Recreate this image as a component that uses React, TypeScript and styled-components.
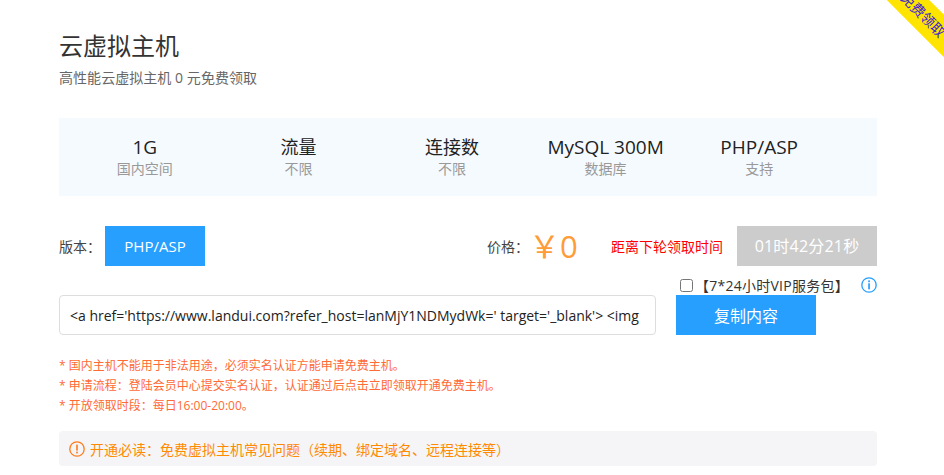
import React from "react";
import styled, { createGlobalStyle } from "styled-components";

const Global = createGlobalStyle`
  html, body { margin: 0; padding: 0; background: #fff; overflow: hidden; }
  body { font-family: "Open Sans", "Noto Sans CJK SC", sans-serif; }
`;

const Page = styled.div`
  position: relative;
  width: 944px;
  height: 475px;
  overflow: hidden;
  padding: 29px 67px 0 59px;
  box-sizing: border-box;
`;

const Ribbon = styled.div`
  position: absolute;
  top: 0px;
  right: -44px;
  width: 130px;
  height: 30px;
  line-height: 30px;
  transform: rotate(45deg);
  background: #ffe400;
  color: #3a22d8;
  font-size: 14px;
  text-align: center;
`;

const Title = styled.h1`
  margin: 0;
  font-size: 24px;
  line-height: 34px;
  font-weight: 400;
  color: #333;
`;

const Subtitle = styled.p`
  margin: 5px 0 0;
  font-size: 14px;
  line-height: 20px;
  letter-spacing: 0.05px;
  color: #666;
`;

const SpecPanel = styled.div`
  display: grid;
  grid-template-columns: repeat(5, 153.6px);
  margin-top: 30px;
  height: 78px;
  padding: 17px 0 0 9px;
  box-sizing: border-box;
  background: #f5faff;
`;

const Spec = styled.div`
  text-align: center;
`;

const SpecValue = styled.div<{ $latin?: boolean }>`
  font-size: ${(p) => (p.$latin ? "19px" : "18px")};
  line-height: 24px;
  color: #222;
`;

const SpecLabel = styled.div`
  font-size: 14px;
  line-height: 20px;
  color: #999;
`;

const PriceRow = styled.div`
  display: flex;
  align-items: center;
  height: 40px;
  margin-top: 30px;
`;

const FieldLabel = styled.span`
  font-size: 14px;
  color: #444;
  width: 46px;
`;

const VersionButton = styled.button`
  width: 100px;
  height: 40px;
  border: 0;
  padding: 0;
  background: #269fff;
  color: #fff;
  font: inherit;
  font-size: 15px;
`;

const PriceLabel = styled.span`
  margin-left: 282px;
  width: 42px;
  font-size: 14px;
  color: #444;
`;

const PriceValue = styled.span`
  width: 82px;
  font-size: 31px;
  line-height: 40px;
  color: #ff9c38;
`;

const CountdownLabel = styled.span`
  width: 126px;
  font-size: 14px;
  color: #f00;
`;

const Countdown = styled.div`
  width: 140px;
  height: 40px;
  line-height: 40px;
  text-align: center;
  background: #ccc;
  color: #fff;
  font-size: 16px;
  letter-spacing: 0.2px;
`;

const VipRow = styled.div`
  display: flex;
  align-items: center;
  height: 29px;
  box-sizing: border-box;
  padding: 9px 0 0 621px;
  font-size: 14px;
  letter-spacing: 0.25px;
  color: #333;
`;

const VipCheck = styled.input`
  width: 13px;
  height: 13px;
  margin: 0;
`;

const VipText = styled.span`
  margin-left: 2px;
  width: 167px;
  white-space: nowrap;
`;

const InfoIcon = styled.svg`
  display: block;
  flex: none;
`;

const CopyRow = styled.div`
  display: flex;
  gap: 20px;
`;

const CodeInput = styled.input`
  width: 597px;
  height: 40px;
  box-sizing: border-box;
  border: 1px solid #ddd;
  border-radius: 4px;
  padding: 0 14px 0 10px;
  font: inherit;
  font-size: 14px;
  color: #222;
  background: #fff;
  outline: none;
`;

const CopyButton = styled.button`
  width: 140px;
  height: 40px;
  border: 0;
  padding: 0;
  background: #269fff;
  color: #fff;
  font: inherit;
  font-size: 16px;
`;

const Notes = styled.ul`
  list-style: none;
  margin: 21px 0 0;
  padding: 0;
`;

const Note = styled.li`
  font-size: 12px;
  line-height: 20px;
  color: #ff6a35;
`;

const Notice = styled.div`
  display: flex;
  align-items: center;
  gap: 5px;
  margin-top: 15px;
  height: 35px;
  padding-left: 10px;
  border-radius: 4px;
  background: #f5f5f7;
  color: #ff8a00;
  font-size: 14px;
`;

export default function App() {
  const specs: [string, string, boolean][] = [
    ["1G", "国内空间", true],
    ["流量", "不限", false],
    ["连接数", "不限", false],
    ["MySQL 300M", "数据库", true],
    ["PHP/ASP", "支持", true],
  ];
  return (
    <Page>
      <Global />
      <Ribbon>免费领取</Ribbon>
      <Title>云虚拟主机</Title>
      <Subtitle>高性能云虚拟主机 0 元免费领取</Subtitle>
      <SpecPanel>
        {specs.map(([v, l, latin]) => (
          <Spec key={v}>
            <SpecValue $latin={latin}>{v}</SpecValue>
            <SpecLabel>{l}</SpecLabel>
          </Spec>
        ))}
      </SpecPanel>
      <PriceRow>
        <FieldLabel>版本：</FieldLabel>
        <VersionButton>PHP/ASP</VersionButton>
        <PriceLabel>价格：</PriceLabel>
        <PriceValue>￥0</PriceValue>
        <CountdownLabel>距离下轮领取时间</CountdownLabel>
        <Countdown>01时42分21秒</Countdown>
      </PriceRow>
      <VipRow>
        <VipCheck type="checkbox" />
        <VipText>【7*24小时VIP服务包】</VipText>
        <InfoIcon width="16" height="16" viewBox="0 0 16 16" fill="none">
          <circle cx="8" cy="8" r="7.2" stroke="#269fff" strokeWidth="1.3" />
          <rect x="7.2" y="3.4" width="1.7" height="1.8" fill="#269fff" />
          <rect x="7.2" y="6.3" width="1.7" height="6" fill="#269fff" />
        </InfoIcon>
      </VipRow>
      <CopyRow>
        <CodeInput
          readOnly
          value="<a href='https://www.landui.com?refer_host=lanMjY1NDMydWk=' target='_blank'> <img"
        />
        <CopyButton>复制内容</CopyButton>
      </CopyRow>
      <Notes>
        <Note>* 国内主机不能用于非法用途，必须实名认证方能申请免费主机。</Note>
        <Note>* 申请流程：登陆会员中心提交实名认证，认证通过后点击立即领取开通免费主机。</Note>
        <Note>* 开放领取时段：每日16:00-20:00。</Note>
      </Notes>
      <Notice>
        <InfoIcon width="16" height="16" viewBox="0 0 16 16" fill="none">
          <circle cx="8" cy="8" r="7.2" stroke="#ff7a1a" strokeWidth="1.3" />
          <rect x="7.2" y="3.6" width="1.6" height="6" fill="#ff7a1a" />
          <rect x="7.2" y="10.6" width="1.6" height="1.8" fill="#ff7a1a" />
        </InfoIcon>
        开通必读：免费虚拟主机常见问题（续期、绑定域名、远程连接等）
      </Notice>
    </Page>
  );
}
